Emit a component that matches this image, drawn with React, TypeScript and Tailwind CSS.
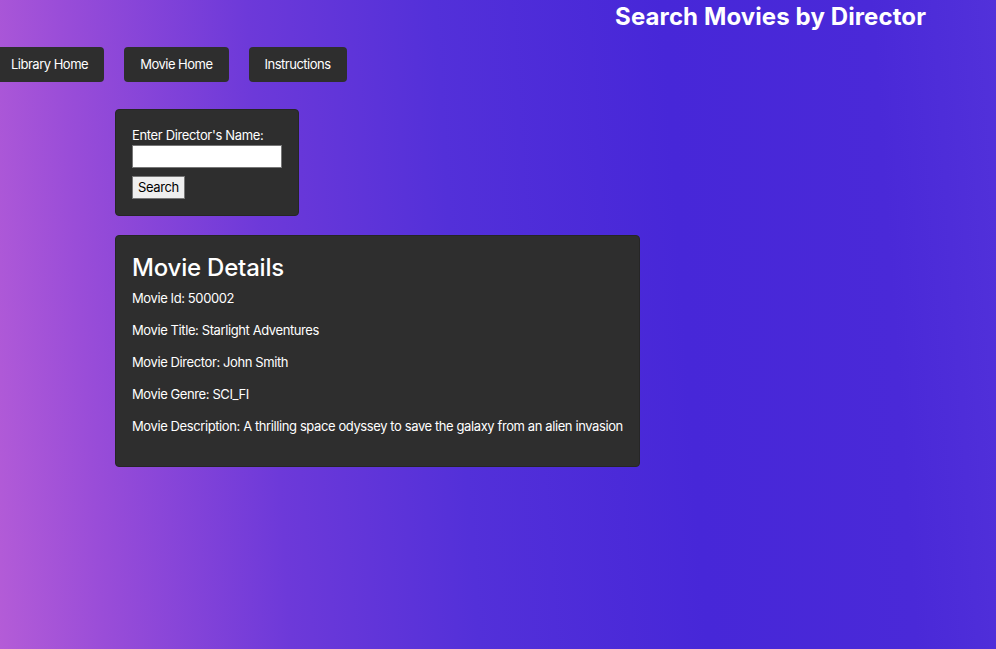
import React from 'react';

const navItems = ['Library Home', 'Movie Home', 'Instructions'];

const details = [
  { label: 'Movie Id', value: '500002' },
  { label: 'Movie Title', value: 'Starlight Adventures' },
  { label: 'Movie Director', value: 'John Smith' },
  { label: 'Movie Genre', value: 'SCI_FI' },
  { label: 'Movie Description', value: 'A thrilling space odyssey to save the galaxy from an alien invasion' },
];

const App = () => {
  return (
    <div className="min-h-[649px] w-full overflow-hidden text-white font-['Inter',sans-serif] bg-[linear-gradient(86deg,#b45cd7_0%,#9a4dd8_10%,#6d39d9_28%,#5330d9_46%,#4727d8_68%,#4a29d8_88%,#5231da_100%)]">
      <header className="flex justify-end pr-[70px] pt-[3px]">
        <h1 className="text-[24px] font-bold leading-[28px] tracking-[0.1px]">Search Movies by Director</h1>
      </header>

      <nav className="flex gap-[20px] mt-[16px] -ml-[5px]">
        {navItems.map((item) => (
          <button
            key={item}
            className="h-[35px] px-[16px] bg-[#2e2e2e] rounded-[4px] text-[13px] tracking-[-0.5px] text-white"
          >
            {item}
          </button>
        ))}
      </nav>

      <main className="ml-[115px] mt-[27px] flex flex-col items-start gap-[19px]">
        <section className="w-[184px] bg-[#2e2e2e] rounded-[4px] border border-[#262626] px-[16px] pt-[17px] pb-[16px]">
          <label className="block text-[13px] leading-[16px] tracking-[-0.35px]">Enter Director's Name:</label>
          <input
            type="text"
            className="mt-[2px] block w-[150px] h-[23px] bg-white border border-[#767676] text-black text-[13px] px-1"
          />
          <button className="mt-[8px] h-[23px] px-[5px] bg-[#efefef] border border-[#767676] text-black text-[13px] tracking-[-0.4px] leading-none">
            Search
          </button>
        </section>

        <section className="w-[525px] bg-[#2e2e2e] rounded-[4px] border border-[#262626] px-[16px] pt-[17px] pb-[17px]">
          <h2 className="text-[24px] leading-[30px] font-medium tracking-[-0.2px]">Movie Details</h2>
          <div className="mt-[6px]">
            {details.map((d) => (
              <p key={d.label} className="text-[13px] leading-[19px] mb-[13px] tracking-[-0.4px] whitespace-nowrap">
                {d.label}: {d.value}
              </p>
            ))}
          </div>
        </section>
      </main>
    </div>
  );
};

export default App;
